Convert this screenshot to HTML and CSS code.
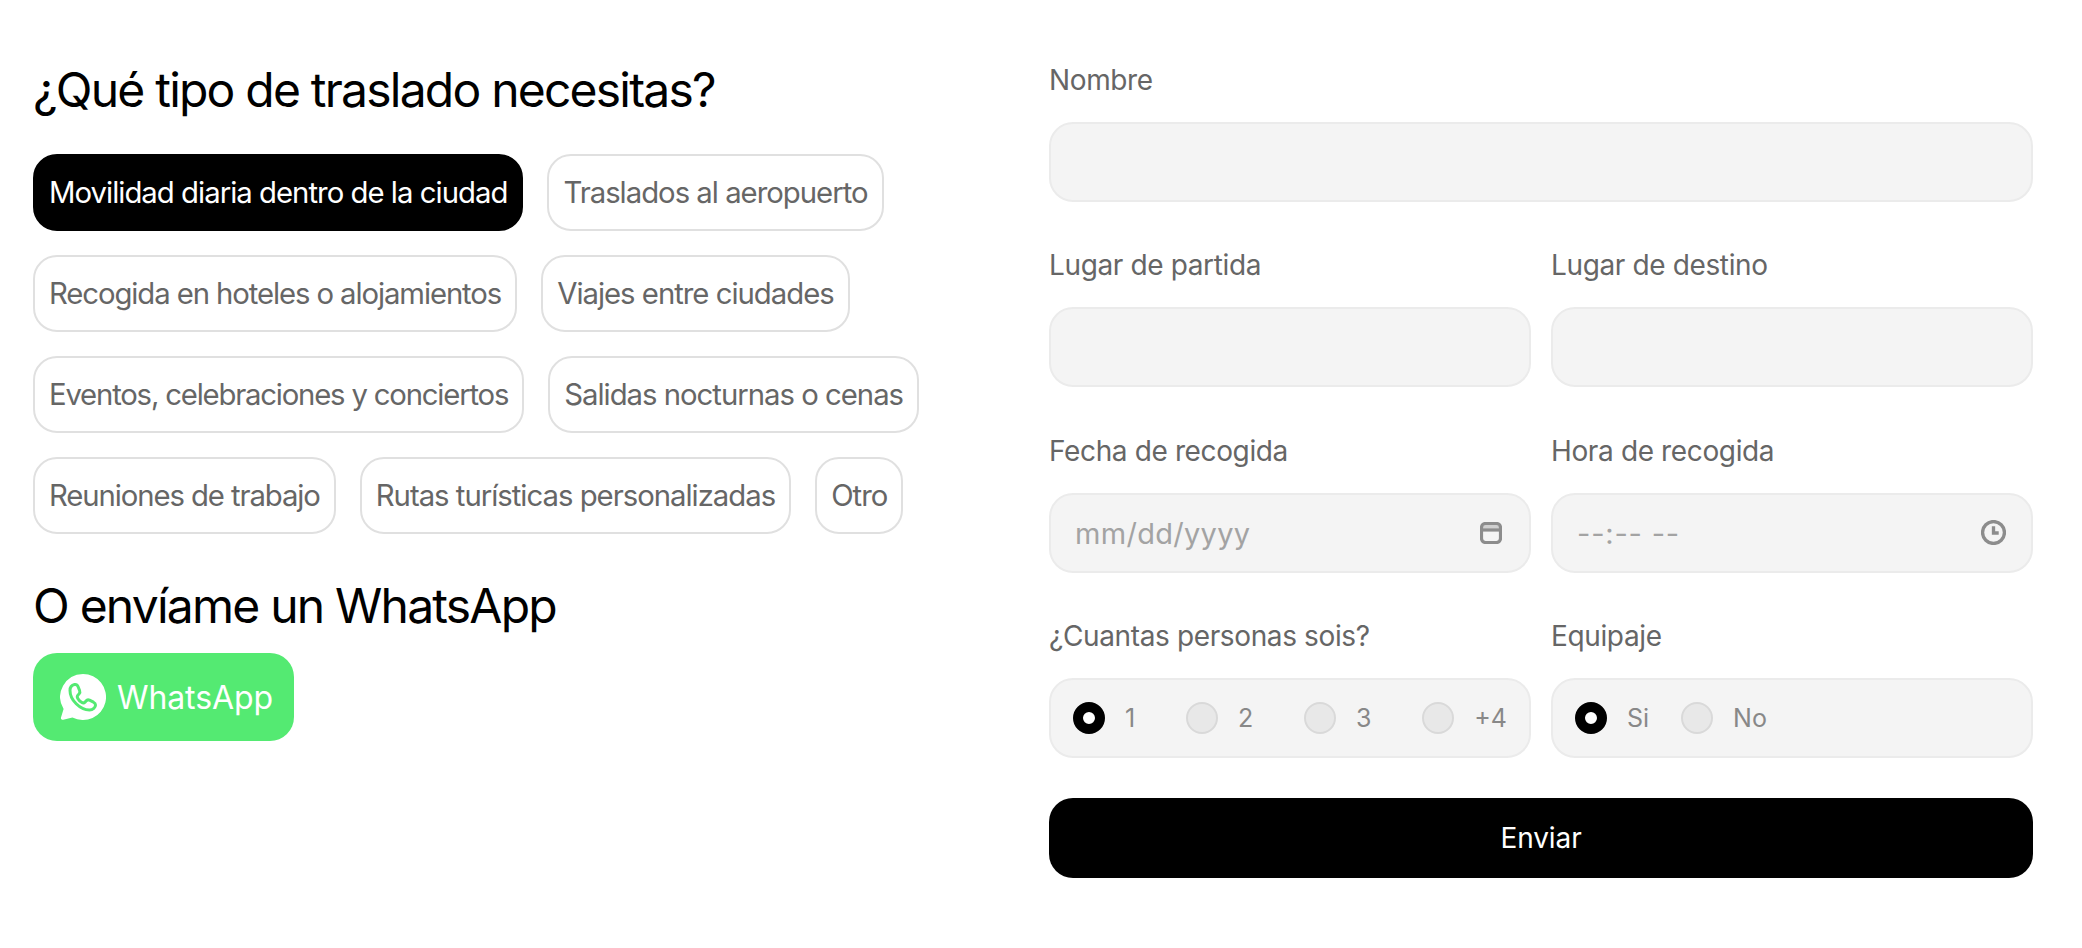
FILE: index.html
```html
<!DOCTYPE html>
<html lang="es">
<head>
<meta charset="utf-8">
<title>Traslados</title>
<link rel="stylesheet" href="styles.css">
</head>
<body>
<main class="page">
  <section class="left">
    <h2 class="title">¿Qué tipo de traslado necesitas?</h2>
    <div class="pills">
      <button class="pill pill-on">Movilidad diaria dentro de la ciudad</button>
      <button class="pill">Traslados al aeropuerto</button>
      <button class="pill pill-snug">Recogida en hoteles o alojamientos</button>
      <button class="pill">Viajes entre ciudades</button>
      <button class="pill pill-tight">Eventos, celebraciones y conciertos</button>
      <button class="pill">Salidas nocturnas o cenas</button>
      <button class="pill pill-snug">Reuniones de trabajo</button>
      <button class="pill">Rutas turísticas personalizadas</button>
      <button class="pill">Otro</button>
    </div>
    <h2 class="title title-second">O envíame un WhatsApp</h2>
    <a class="wa" href="#">
      <svg class="wa-icon" viewBox="0 0 46 46" aria-hidden="true">
        <path class="wa-bubble" d="M23 0a23 23 0 1 1-10.6 43.4l-9.2 2.4c-1.5.3-2.7-1-2.2-2.4l2.6-8.4A23 23 0 0 1 23 0z"/>
        <path class="wa-phone" d="M14.5 10.5C12 11 10 13 10 16.5C10 26 20 36 29.5 36C33 36 35.5 33.5 35.5 31C35.5 29.5 35 29 33.5 28.2L29.5 26.2C28 25.5 27 25.8 26 27L25 28.2C24 29.2 23 29.2 21.5 28.2C19.5 27 18.5 25.8 17.8 24.5C17 23 17 22 18 21L19 20C20 19 20.2 18 19.6 16.5L18 12.5C17.4 11 16 10.2 14.5 10.5Z"/>
      </svg>
      <span>WhatsApp</span>
    </a>
  </section>
  <form class="form">
    <div class="field wide">
      <label class="label">Nombre</label>
      <div class="box"></div>
    </div>
    <div class="field">
      <label class="label">Lugar de partida</label>
      <div class="box"></div>
    </div>
    <div class="field">
      <label class="label">Lugar de destino</label>
      <div class="box"></div>
    </div>
    <div class="field">
      <label class="label">Fecha de recogida</label>
      <div class="box box-picker">
        <span class="ph">mm/dd/yyyy</span>
        <svg class="pick-icon" viewBox="0 0 22 22" aria-hidden="true">
          <rect class="ic-band" x="1.5" y="1.5" width="19" height="6"/>
          <rect class="ic-line" x="1.5" y="1.5" width="19" height="19" rx="4"/>
          <path class="ic-line" d="M1.5 8h19"/>
        </svg>
      </div>
    </div>
    <div class="field">
      <label class="label">Hora de recogida</label>
      <div class="box box-picker">
        <span class="ph ph-time">--:-- --</span>
        <svg class="pick-icon pick-clock" viewBox="0 0 24 24" aria-hidden="true">
          <circle class="ic-line" cx="12" cy="12" r="10.5"/>
          <path class="ic-line" d="M12 6v6.5h5"/>
        </svg>
      </div>
    </div>
    <div class="field">
      <label class="label">¿Cuantas personas sois?</label>
      <div class="box box-radios">
        <span class="opt"><i class="radio radio-on"></i>1</span>
        <span class="opt"><i class="radio"></i>2</span>
        <span class="opt"><i class="radio"></i>3</span>
        <span class="opt"><i class="radio"></i>+4</span>
      </div>
    </div>
    <div class="field">
      <label class="label">Equipaje</label>
      <div class="box box-radios box-radios-start">
        <span class="opt"><i class="radio radio-on"></i>Si</span>
        <span class="opt"><i class="radio"></i>No</span>
      </div>
    </div>
    <button class="send wide" type="button">Enviar</button>
  </form>
</main>
</body>
</html>
```
FILE: styles.css
```css
* { box-sizing: border-box; }
html, body { margin: 0; background: #fff; }
body { font-family: Inter, "Liberation Sans", sans-serif; color: #000; }
.page {
  display: flex;
  justify-content: space-between;
  padding: 60px 49px 0 33px;
  height: 948px;
  overflow: hidden;
}
.left { width: 960px; }
.title {
  margin: 0;
  font-size: 48px;
  line-height: 60px;
  font-weight: 400;
  letter-spacing: -1.78px;
}
.title-second { margin-top: 42px; }
.pills {
  display: flex;
  flex-wrap: wrap;
  gap: 24px;
  margin-top: 34px;
}
.pill {
  height: 77px;
  padding: 0 14px;
  font: 400 29.3px Inter, sans-serif;
  letter-spacing: -1px;
  color: #666;
  background: #fff;
  border: 2px solid #e0e0e0;
  border-radius: 24px;
}
.pill-snug { letter-spacing: -1.09px; }
.pill-tight { letter-spacing: -1.19px; }
.pill-on { background: #000; border-color: #000; color: #fff; letter-spacing: -0.97px; }
.wa {
  display: inline-flex;
  align-items: center;
  gap: 11px;
  height: 88px;
  margin-top: 17px;
  padding: 0 21px 0 27px;
  background: #54ea72;
  border-radius: 24px;
  color: #fff;
  font-size: 32px;
  letter-spacing: -0.1px;
  text-decoration: none;
}
.wa-icon { width: 46px; height: 46px; }
.wa-bubble { fill: #fff; }
.wa-phone { fill: none; stroke: #54ea72; stroke-width: 3; stroke-linejoin: round; }
.form {
  width: 984px;
  display: grid;
  grid-template-columns: 1fr 1fr;
  column-gap: 20px;
  row-gap: 43.4px;
  align-self: flex-start;
}
.wide { grid-column: 1 / -1; }
.label {
  display: block;
  font-size: 28px;
  line-height: 40px;
  letter-spacing: -0.37px;
  color: #666;
  margin-bottom: 22px;
}
.box {
  height: 80px;
  background: #f4f4f4;
  border: 2px solid #ebebeb;
  border-radius: 24px;
}
.box-picker {
  display: flex;
  align-items: center;
  justify-content: space-between;
  padding: 0 25px 0 24px;
}
.ph { font-size: 29px; color: #a3a3a3; letter-spacing: 0.3px; padding-top: 2px; }
.ph-time { letter-spacing: 0.8px; }
.pick-icon { width: 22px; height: 22px; margin-right: 2px; }
.pick-clock { width: 25px; height: 25px; margin-right: 0; }
.ic-band { fill: #cfcfcf; }
.ic-line { fill: none; stroke: #8c8c8c; stroke-width: 3.2; }
.box-radios {
  display: flex;
  align-items: center;
  justify-content: space-between;
  padding: 0 22px;
}
.box-radios-start { justify-content: flex-start; gap: 32px; }
.opt {
  display: flex;
  align-items: center;
  gap: 20px;
  font-size: 25px;
  color: #888;
}
.radio {
  width: 32px;
  height: 32px;
  border-radius: 50%;
  background: #e8e8e8;
  border: 2px solid #d9d9d9;
}
.radio-on { background: #fff; border: 10.5px solid #000; }
.send {
  height: 80px;
  margin-top: -3.4px;
  background: #000;
  color: #fff;
  border: 0;
  border-radius: 24px;
  font: 400 28px Inter, sans-serif;
  letter-spacing: -0.1px;
}
```
